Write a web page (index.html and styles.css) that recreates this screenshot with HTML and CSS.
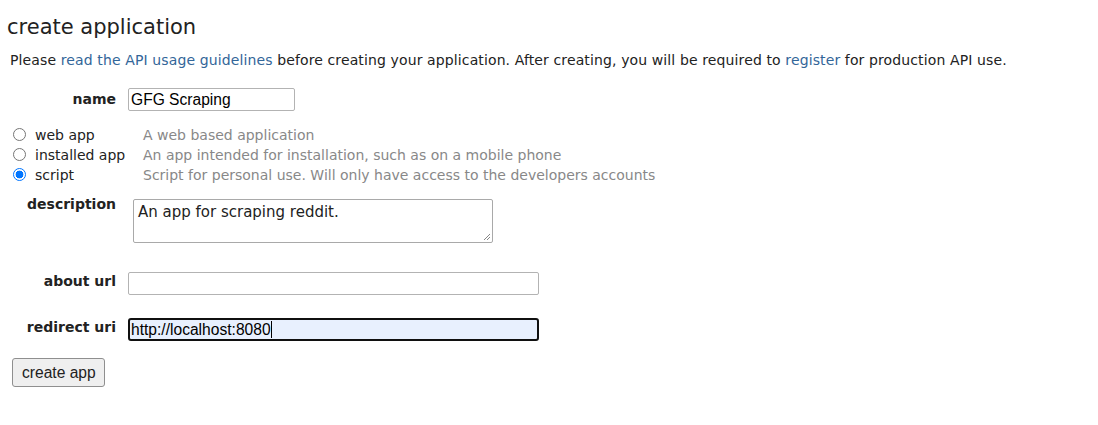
FILE: index.html
```html
<!DOCTYPE html>
<html>
<head>
<meta charset="utf-8">
<link rel="stylesheet" href="styles.css">
</head>
<body>
<div class="page">
  <h1 class="title">create application</h1>
  <p class="intro">Please <a href="#">read the API usage guidelines</a> before creating your application. After creating, you will be required to <a href="#">register</a> for production API use.</p>
  <div class="row row-name">
    <span class="label">name</span>
    <div class="field name-field">GFG Scraping</div>
  </div>
  <div class="types">
    <div class="type">
      <span class="radio"></span><span class="type-name">web app</span><span class="type-desc">A web based application</span>
    </div>
    <div class="type">
      <span class="radio"></span><span class="type-name">installed app</span><span class="type-desc">An app intended for installation, such as on a mobile phone</span>
    </div>
    <div class="type">
      <span class="radio checked"></span><span class="type-name">script</span><span class="type-desc">Script for personal use. Will only have access to the developers accounts</span>
    </div>
  </div>
  <div class="row row-desc">
    <span class="label">description</span>
    <div class="textarea">An app for scraping reddit.<svg class="grip" width="9" height="9" viewBox="0 0 9 9"><path d="M8 2 L2 8 M8 5 L5 8" stroke="#888" stroke-width="1"/></svg></div>
  </div>
  <div class="row row-about">
    <span class="label">about url</span>
    <div class="field url-field"></div>
  </div>
  <div class="row row-redirect">
    <span class="label">redirect uri</span>
    <div class="field url-field focused">http://localhost:8080<span class="caret"></span></div>
  </div>
  <div class="button">create app</div>
</div>
</body>
</html>
```
FILE: styles.css
```css
* { box-sizing: border-box; }
body {
  margin: 0;
  background: #fff;
  font-family: "DejaVu Sans", Verdana, sans-serif;
  font-size: 14px;
  color: #222;
}
.page { padding: 0; }
.title {
  margin: 0;
  padding: 14px 0 0 7px;
  font-size: 21px;
  font-weight: normal;
  line-height: 26px;
  color: #222;
}
.intro {
  margin: 0;
  padding: 12px 0 0 10px;
  line-height: 17px;
  font-size: 14px;
  letter-spacing: 0.12px;
  white-space: nowrap;
}
.intro a { color: #369; text-decoration: none; }
.row { display: flex; align-items: flex-start; }
.label {
  width: 116px;
  text-align: right;
  font-weight: bold;
  font-size: 14px;
  line-height: 16px;
  white-space: nowrap;
}
.row-name { margin-top: 19px; }
.row-name .label { padding-top: 3px; }
.field {
  height: 23px;
  border: 1px solid #b3b3b3;
  border-radius: 2px;
  font-family: "Liberation Sans", Arial, sans-serif;
  font-size: 15.6px;
  line-height: 21px;
  padding: 0 2px;
  color: #000;
  background: #fff;
}
.name-field { margin-left: 12px; width: 167px; }
.types { margin-top: 14px; padding-left: 13px; }
.type { display: flex; align-items: center; height: 20px; }
.radio {
  width: 13px; height: 13px;
  border: 1px solid #767676;
  border-radius: 50%;
  background: #fff;
  flex: none;
  margin-top: -2px;
}
.radio.checked {
  border: 1px solid #0075ff;
  background: radial-gradient(circle, #0075ff 0 3.6px, #fff 4.2px);
}
.type-name { width: 117px; padding-left: 9px; line-height: 16px; white-space: nowrap; }
.type-desc { color: #888; padding-left: 0; line-height: 16px; white-space: nowrap; }
.row-desc { margin-top: 14px; }
.row-desc .label { margin-top: -3px; }
.textarea {
  position: relative;
  margin-left: 17px;
  width: 360px;
  height: 44px;
  border: 1px solid #a9a9a9;
  border-radius: 2px;
  padding: 3px 4px;
  font-size: 15px;
  line-height: 18px;
  color: #222;
}
.grip { position: absolute; right: 1px; bottom: 1px; }
.row-about { margin-top: 29px; }
.row-about .label { padding-top: 1px; }
.url-field { margin-left: 12px; width: 411px; }
.row-redirect { margin-top: 23px; }
.row-redirect .label { padding-top: 1px; }
.focused {
  border: 2px solid #101010;
  border-radius: 3px;
  background: #e8f0fe;
  line-height: 19px;
  padding-left: 1px;
}
.caret {
  display: inline-block;
  width: 1px;
  height: 17px;
  background: #000;
  vertical-align: -3px;
}
.button {
  display: inline-block;
  margin: 17px 0 0 12px;
  height: 29px;
  padding: 0 8px 0 9px;
  border: 1px solid #8f8f8f;
  border-radius: 3px;
  background: #efefef;
  font-family: "Liberation Sans", Arial, sans-serif;
  font-size: 15.6px;
  line-height: 27px;
  color: #222;
}
```
